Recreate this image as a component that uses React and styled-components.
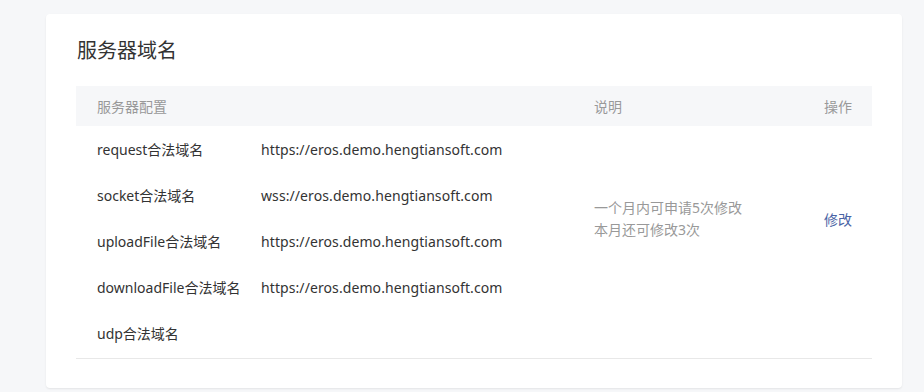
import React from 'react'
import styled, { createGlobalStyle } from 'styled-components'

const GlobalStyle = createGlobalStyle`
  html, body {
    margin: 0;
    padding: 0;
    background: #f6f7f9;
    font-family: "Noto Sans", "Noto Sans CJK SC", sans-serif;
    color: #333;
  }
`

const Page = styled.div`
  padding: 14px 22px 4px 46px;
`

const Card = styled.section`
  background: #fff;
  border-radius: 4px;
  box-shadow: 0 1px 2px rgba(0, 0, 0, 0.08);
  padding: 22px 30px 30px 30px;
  height: 374px;
  box-sizing: border-box;
`

const Title = styled.h2`
  margin: 0 0 20px 1px;
  font-size: 20px;
  font-weight: normal;
  line-height: 30px;
  color: #333;
`

const Table = styled.div`
  border-bottom: 1px solid #e8e8e8;
`

const HeadRow = styled.div`
  display: grid;
  grid-template-columns: 518px 230px 1fr;
  height: 40px;
  align-items: center;
  background: #f6f7f9;
  color: #999;
  font-size: 14px;
`

const HeadCell = styled.div`
  padding-left: ${p => p.$pad || 0}px;
`

const Body = styled.div`
  display: grid;
  grid-template-columns: 518px 230px 1fr;
`

const DomainList = styled.div`
  display: flex;
  flex-direction: column;
  padding: 0 0 2px 21px;
`

const DomainRow = styled.div`
  display: grid;
  grid-template-columns: 164px 1fr;
  height: 46px;
  align-items: center;
  font-size: 14px;
  color: #333;
`

const Url = styled.span`
  letter-spacing: 0.09px;
`

const Note = styled.div`
  display: flex;
  flex-direction: column;
  justify-content: center;
  padding-bottom: 46px;
  font-size: 14px;
  line-height: 22px;
  color: #999;
`

const Action = styled.div`
  display: flex;
  align-items: center;
  padding-bottom: 46px;
`

const Link = styled.a`
  font-size: 14px;
  color: #4a64a5;
  text-decoration: none;
  cursor: pointer;
`

const domains = [
  ['request合法域名', 'https://eros.demo.hengtiansoft.com'],
  ['socket合法域名', 'wss://eros.demo.hengtiansoft.com'],
  ['uploadFile合法域名', 'https://eros.demo.hengtiansoft.com'],
  ['downloadFile合法域名', 'https://eros.demo.hengtiansoft.com'],
  ['udp合法域名', ''],
]

export default function App() {
  return (
    <>
      <GlobalStyle />
      <Page>
        <Card>
          <Title>服务器域名</Title>
          <Table>
            <HeadRow>
              <HeadCell $pad={21}>服务器配置</HeadCell>
              <HeadCell>说明</HeadCell>
              <HeadCell>操作</HeadCell>
            </HeadRow>
            <Body>
              <DomainList>
                {domains.map(([name, url]) => (
                  <DomainRow key={name}>
                    <span>{name}</span>
                    <Url>{url}</Url>
                  </DomainRow>
                ))}
              </DomainList>
              <Note>
                <span>一个月内可申请5次修改</span>
                <span>本月还可修改3次</span>
              </Note>
              <Action>
                <Link>修改</Link>
              </Action>
            </Body>
          </Table>
        </Card>
      </Page>
    </>
  )
}
